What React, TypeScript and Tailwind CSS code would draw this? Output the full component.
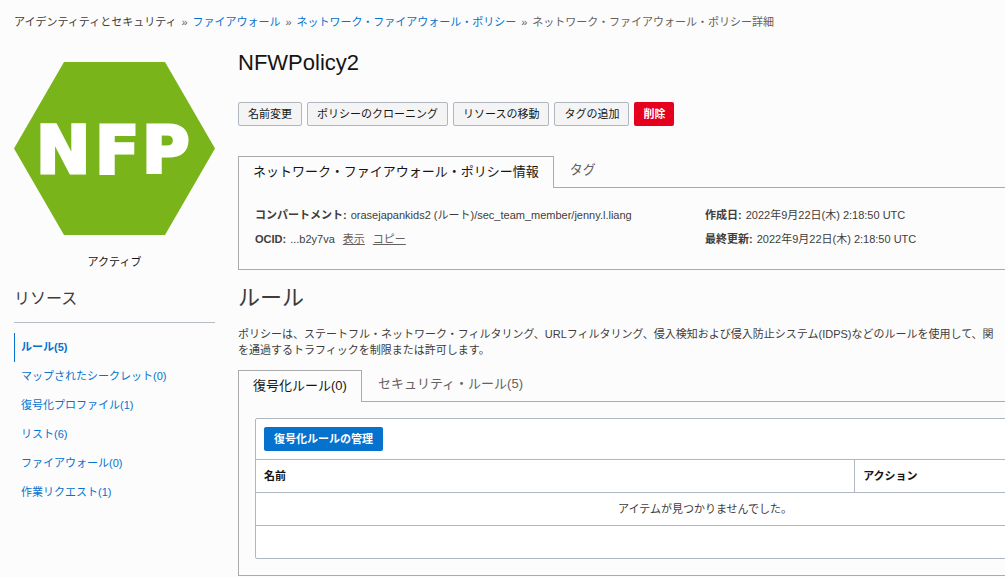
import { Fragment, type ReactNode } from 'react';

const crumbs = [
  { label: 'アイデンティティとセキュリティ', link: false, tone: 'text-[#3f3c3a]' },
  { label: 'ファイアウォール', link: true, tone: 'text-[#0572ce]' },
  { label: 'ネットワーク・ファイアウォール・ポリシー', link: true, tone: 'text-[#0572ce]' },
  { label: 'ネットワーク・ファイアウォール・ポリシー詳細', link: false, tone: 'text-[#66615c]' },
];

const actions = ['名前変更', 'ポリシーのクローニング', 'リソースの移動', 'タグの追加'];

const resources = [
  'ルール(5)',
  'マップされたシークレット(0)',
  '復号化プロファイル(1)',
  'リスト(6)',
  'ファイアウォール(0)',
  '作業リクエスト(1)',
];

function Breadcrumbs() {
  return (
    <nav aria-label="パンくずリスト" className="flex items-center whitespace-nowrap pt-[14px] pl-[14px] leading-4">
      {crumbs.map((c, i) => (
        <Fragment key={c.label}>
          {i > 0 && <span className="w-4 text-center text-[#66615c]">»</span>}
          {c.link ? (
            <a href="#" className={c.tone}>{c.label}</a>
          ) : (
            <span className={c.tone}>{c.label}</span>
          )}
        </Fragment>
      ))}
    </nav>
  );
}

function PolicyBadge() {
  return (
    <svg viewBox="0 0 201 173" className="block w-full" role="img" aria-label="NFP">
      <polygon points="50,0 151,0 201,86.5 151,173 50,173 0,86.5" fill="#78b41a" />
      <text
        x="22 81 128"
        y="111"
        fill="#fff"
        stroke="#fff"
        strokeWidth="3"
        fontFamily="DejaVu Sans, sans-serif"
        fontSize="65"
        fontWeight="700"
      >
        NFP
      </text>
    </svg>
  );
}

function Tabs({ active, other }: { active: string; other: string }) {
  return (
    <div role="tablist" className="flex h-8 text-[13px] leading-[18px]">
      <button
        role="tab"
        aria-selected="true"
        className="border border-b-0 border-[#aaabad] px-[14px] pb-[2px] text-[#161513]"
      >
        {active}
      </button>
      <button
        role="tab"
        aria-selected="false"
        className="flex-1 border-b border-[#aaabad] px-4 pb-1 text-left text-[#66615c]"
      >
        {other}
      </button>
    </div>
  );
}

function Field({ label, children }: { label: string; children: ReactNode }) {
  return (
    <div className="flex gap-1 whitespace-nowrap leading-6">
      <dt className="font-bold">{label}:</dt>
      <dd>{children}</dd>
    </div>
  );
}

export default function App() {
  return (
    <div className="min-h-screen overflow-hidden bg-[#fcfcfc] font-['Liberation_Sans','Noto_Sans_CJK_JP',sans-serif] text-[11px] text-[#3f3c3a]">
      <Breadcrumbs />
      <div className="flex gap-[23px] pt-5 pl-[14px]">
        <aside className="w-[201px] shrink-0 pt-3">
          <PolicyBadge />
          <p className="pt-[19px] text-center leading-4 text-[#161513]">アクティブ</p>
          <h2 className="mt-[17px] border-b border-[#b6bac2] pb-[11px] text-base leading-6">リソース</h2>
          <ul className="pt-[10px] text-[#0572ce]">
            {resources.map((r, i) => (
              <li key={r}>
                <a
                  href="#"
                  className={
                    i === 0
                      ? 'block border-l border-[#0572ce] pl-[6px] font-bold leading-[29px]'
                      : 'block pl-[7px] leading-[29px]'
                  }
                >
                  {r}
                </a>
              </li>
            ))}
          </ul>
        </aside>

        <main className="min-w-0 flex-1">
          <h1 className="text-[22px] leading-[26px] text-[#161513]">NFWPolicy2</h1>
          <div className="flex gap-[5px] pt-[26px] pb-[30px] leading-4 text-[#161513]">
            {actions.map((a) => (
              <button key={a} className="h-6 rounded-xs border border-[#b1b7c0] bg-[#f4f4f4] px-[9px]">
                {a}
              </button>
            ))}
            <button className="h-6 rounded-xs bg-[#e6001e] px-[9px] font-bold text-white">削除</button>
          </div>

          <Tabs active="ネットワーク・ファイアウォール・ポリシー情報" other="タグ" />
          <section className="grid grid-cols-[3fr_2fr] border-b border-l border-[#aaabad] pt-[15px] pb-[18px] pl-4">
            <dl>
              <Field label="コンパートメント">orasejapankids2 (ルート)/sec_team_member/jenny.l.liang</Field>
              <Field label="OCID">
                ...b2y7va
                <a href="#" className="ml-2 text-[#66615c] underline">表示</a>
                <a href="#" className="ml-2 text-[#66615c] underline">コピー</a>
              </Field>
            </dl>
            <dl>
              <Field label="作成日">2022年9月22日(木) 2:18:50 UTC</Field>
              <Field label="最終更新">2022年9月22日(木) 2:18:50 UTC</Field>
            </dl>
          </section>

          <h2 className="pt-3 text-[22px] leading-8">ルール</h2>
          <p className="pt-3 pb-3 leading-4 whitespace-nowrap">
            ポリシーは、ステートフル・ネットワーク・フィルタリング、URLフィルタリング、侵入検知および侵入防止システム(IDPS)などのルールを使用して、関
            <br />
            を通過するトラフィックを制限または許可します。
          </p>

          <Tabs active="復号化ルール(0)" other="セキュリティ・ルール(5)" />
          <section className="overflow-hidden border-b border-l border-[#aaabad] py-4 pl-4">
            <div className="w-[120%] rounded-xs border border-[#b1b7c0] bg-white">
              <div className="p-2">
                <button className="h-6 rounded-xs bg-[#0572ce] px-[10px] font-bold text-white">
                  復号化ルールの管理
                </button>
              </div>
              <table className="w-full table-fixed border-collapse">
                <thead>
                  <tr className="h-[33px] border-y border-[#b1b7c0] text-left text-[#161513]">
                    <th className="w-2/3 border-r border-[#b1b7c0] px-2">名前</th>
                    <th className="px-2">アクション</th>
                  </tr>
                </thead>
                <tbody>
                  <tr className="h-[33px] border-b border-[#b1b7c0]">
                    <td colSpan={2} className="text-center">アイテムが見つかりませんでした。</td>
                  </tr>
                  <tr className="h-8">
                    <td colSpan={2} />
                  </tr>
                </tbody>
              </table>
            </div>
          </section>
        </main>
      </div>
    </div>
  );
}
